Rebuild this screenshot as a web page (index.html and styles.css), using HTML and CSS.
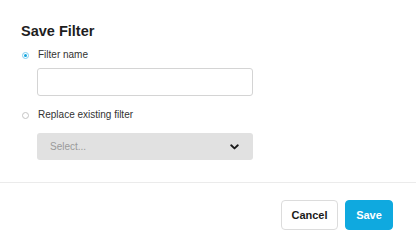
FILE: index.html
```html
<!DOCTYPE html>
<html>
<head>
<meta charset="utf-8">
<link rel="stylesheet" href="styles.css">
</head>
<body>
<div class="dialog">
  <div class="content">
    <h2 class="title">Save Filter</h2>
    <label class="option"><span class="radio checked"></span>Filter name</label>
    <div class="field"><input class="text-input" type="text"></div>
    <label class="option option-second"><span class="radio"></span>Replace existing filter</label>
    <div class="field select-field">
      <div class="select"><span class="placeholder">Select...</span>
        <svg class="chevron" width="9" height="6" viewBox="0 0 9 6"><path d="M1.2 1.3 L4.5 4.4 L7.8 1.3" fill="none" stroke="#1a1a1a" stroke-width="1.9" stroke-linecap="round" stroke-linejoin="round"/></svg>
      </div>
    </div>
  </div>
  <div class="footer">
    <button class="btn btn-cancel">Cancel</button>
    <button class="btn btn-save">Save</button>
  </div>
</div>
</body>
</html>
```
FILE: styles.css
```css
html, body {
  margin: 0;
  padding: 0;
  background: #fff;
}
body {
  font-family: "Liberation Sans", Arial, sans-serif;
  color: #333;
}
.dialog {
  width: 416px;
  height: 246px;
  display: flex;
  flex-direction: column;
}
.content {
  padding: 23px 21px 22px 21px;
  display: flex;
  flex-direction: column;
}
.title {
  margin: 0;
  font-size: 14.5px;
  line-height: 17px;
  font-weight: bold;
  color: #1e1e1e;
}
.option {
  display: flex;
  align-items: center;
  margin-top: 9px;
  font-size: 10px;
  line-height: 12px;
  color: #333;
}
.option-second {
  margin-top: 13px;
}
.radio {
  box-sizing: border-box;
  width: 7px;
  height: 7px;
  border-radius: 50%;
  border: 1px solid #c4c4c4;
  margin-left: 1px;
  margin-right: 9px;
  display: flex;
  align-items: center;
  justify-content: center;
  background: #fff;
}
.radio.checked {
  border-color: #7fcdef;
  background: #fff;
}
.radio.checked::after {
  content: "";
  width: 3px;
  height: 3px;
  border-radius: 50%;
  background: #14a6de;
}
.field {
  margin-top: 7px;
  margin-left: 16px;
}
.select-field {
  margin-top: 12px;
}
.text-input {
  box-sizing: border-box;
  display: block;
  width: 216px;
  height: 28px;
  border: 1px solid #d4d4d4;
  border-radius: 3px;
  background: #fff;
  margin: 0;
  padding: 0 8px;
  outline: none;
}
.select {
  box-sizing: border-box;
  width: 216px;
  height: 27px;
  border-radius: 3px;
  background: #e1e1e1;
  display: flex;
  align-items: center;
  justify-content: space-between;
  padding: 0 14px 0 13px;
}
.placeholder {
  font-size: 10px;
  color: #9a9a9a;
}
.chevron {
  display: block;
  margin-top: 1px;
}
.footer {
  border-top: 1px solid #ebebeb;
  padding: 17px 23px 0 0;
  display: flex;
  justify-content: flex-end;
  gap: 7px;
}
.btn {
  box-sizing: border-box;
  height: 30px;
  border-radius: 4px;
  font-family: "Liberation Sans", Arial, sans-serif;
  font-size: 11px;
  font-weight: bold;
  padding: 0;
  margin: 0;
  cursor: pointer;
}
.btn-cancel {
  width: 57px;
  background: #fff;
  border: 1px solid #dcdcdc;
  color: #1a1a1a;
}
.btn-save {
  width: 48px;
  background: #0fa9df;
  border: 1px solid #0fa9df;
  color: #fff;
}
```
